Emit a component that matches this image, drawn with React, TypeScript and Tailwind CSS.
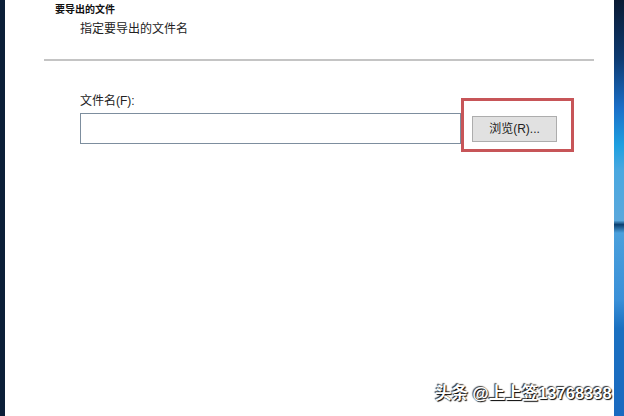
import React from "react";

const cjk = "font-['Liberation_Sans','Noto_Sans_CJK_SC',sans-serif]";

const App = () => {
    return (
        <div className={`relative flex h-[416px] w-[624px] overflow-hidden bg-white ${cjk}`}>
            {/* desktop behind the dialog, left edge */}
            <div className="w-[5px] shrink-0 bg-[#0b1f38]" />

            <div className="flex flex-1 flex-col bg-white">
                <div className="pl-[50px] pt-[3px] text-[10px] font-bold leading-[13px] text-[#111]">
                    要导出的文件
                </div>
                <div className="mt-[6px] pl-[75px] text-[12px] leading-[14px] text-[#222]">
                    指定要导出的文件名
                </div>

                <div className="ml-[39px] mr-[20px] mt-[23px] h-[2px] bg-[#c4c4c4]" />

                <div className="mt-[33px] pl-[75px]">
                    <div className="text-[12px] leading-[14px] text-[#222]">文件名(F):</div>
                    <div className="mt-[5px] flex items-start">
                        <div className="h-[31px] w-[381px] border border-[#7d8e9e] bg-white" />
                        <div className="relative ml-[11px] mt-[3px]">
                            <button className="flex h-[26px] w-[85px] items-center justify-center border border-[#adadad] bg-[#e1e1e1] text-[12px] leading-none text-[#222]">
                                浏览(R)...
                            </button>
                            {/* red highlight annotation */}
                            <div className="pointer-events-none absolute left-[-11px] top-[-18px] h-[54px] w-[113px] border-[3px] border-[#c75558]" />
                        </div>
                    </div>
                </div>
            </div>

            {/* desktop behind the dialog, right edge */}
            <div className="w-[10px] shrink-0 bg-[linear-gradient(180deg,#0a1a33_0%,#0d3a70_14%,#1a6fc8_26%,#1ea0e0_35%,#4aa8e0_41%,#5aa8dc_53%,#0a3f70_54%,#4aa0dc_56%,#3a90d8_72%,#1a70c0_79%,#1a6ac0_100%)]" />

            {/* watermark */}
            <div className="absolute left-[435px] top-[383px] whitespace-nowrap text-[16.5px] font-bold leading-[20px] text-white [text-shadow:1px_1px_1px_#000,-1px_-1px_1px_#333]">
                头条 @上上签13768338
            </div>
        </div>
    );
};

export default App;
